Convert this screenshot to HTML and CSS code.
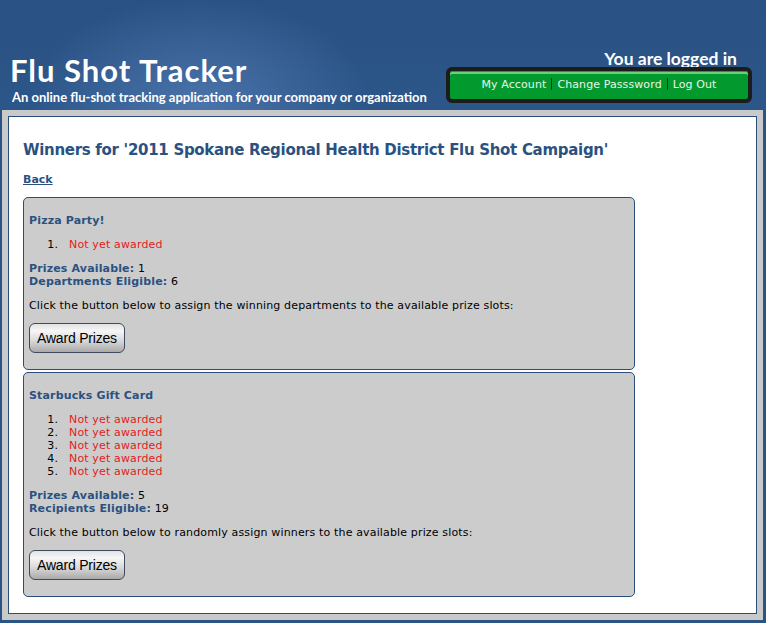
FILE: index.html
```html
<!DOCTYPE html>
<html>
<head>
<meta charset="utf-8">
<title>Flu Shot Tracker</title>
<link rel="stylesheet" href="styles.css">
</head>
<body>
<div class="header">
  <div class="brand">
    <div class="brand-title">Flu Shot Tracker</div>
    <div class="brand-sub">An online flu-shot tracking application for your company or organization</div>
  </div>
  <div class="account">
    <div class="logged">You are logged in</div>
    <div class="nav">
      <a href="#">My Account</a><span class="sep"></span><a href="#">Change Passsword</a><span class="sep"></span><a href="#">Log Out</a>
    </div>
  </div>
</div>
<div class="frame">
  <div class="content">
    <h2 class="page-title">Winners for '2011 Spokane Regional Health District Flu Shot Campaign'</h2>
    <a class="back" href="#">Back</a>
    <div class="panel">
      <div class="prize-name">Pizza Party!</div>
      <ol class="winners">
        <li>Not yet awarded</li>
      </ol>
      <p class="stats"><b>Prizes Available:</b> 1<br><b>Departments Eligible:</b> 6</p>
      <p class="note">Click the button below to assign the winning departments to the available prize slots:</p>
      <button class="award">Award Prizes</button>
    </div>
    <div class="panel">
      <div class="prize-name">Starbucks Gift Card</div>
      <ol class="winners">
        <li>Not yet awarded</li>
        <li>Not yet awarded</li>
        <li>Not yet awarded</li>
        <li>Not yet awarded</li>
        <li>Not yet awarded</li>
      </ol>
      <p class="stats"><b>Prizes Available:</b> 5<br><b>Recipients Eligible:</b> 19</p>
      <p class="note">Click the button below to randomly assign winners to the available prize slots:</p>
      <button class="award">Award Prizes</button>
    </div>
  </div>
</div>
</body>
</html>
```

FILE: styles.css
```css
html, body {
  margin: 0;
  padding: 0;
}
body {
  background: #2a5386;
  font-family: Verdana, "DejaVu Sans", sans-serif;
  font-size: 11px;
  line-height: 13px;
  color: #000;
  height: 623px;
  overflow: hidden;
}
.header {
  height: 110px;
  display: flex;
  justify-content: space-between;
  align-items: flex-end;
  background:
    radial-gradient(ellipse 170px 110px at 200px 105px, rgba(105,145,205,0.5), rgba(105,145,205,0) 100%),
    linear-gradient(#2a5183, #2c5689);
}
.brand {
  padding: 0 0 5px 10px;
  color: #fff;
  font-family: Lato, "Open Sans", sans-serif;
  font-weight: bold;
}
.brand-title {
  font-size: 31px;
  line-height: 37px;
  letter-spacing: 1px;
}
.brand-sub {
  font-size: 13px;
  line-height: 16px;
  padding-left: 2px;
}
.account {
  display: flex;
  flex-direction: column;
  align-items: flex-end;
  margin: 0 14px 7px 0;
}
.logged {
  color: #fff;
  font-family: Lato, "Open Sans", sans-serif;
  font-weight: bold;
  font-size: 17.5px;
  line-height: 21px;
  padding-right: 15px;
  margin-bottom: -2px;
}
.nav {
  width: 298px;
  height: 26px;
  border: 4px solid #1c1c1c;
  border-radius: 6px;
  background: #029a2f;
  box-shadow: inset 0 1px 0 #12a23a, inset 0 3px 0 #6fd07c;
  display: flex;
  align-items: center;
  justify-content: center;
  padding-bottom: 2px;
  box-sizing: content-box;
}
.nav a {
  color: #e8f5e8;
  text-decoration: none;
  font-size: 11px;
  padding: 0 5px;
  letter-spacing: 0.1px;
}
.sep {
  width: 1px;
  height: 12px;
  background: #0b3f16;
}
.frame {
  margin: 0 3px 0 2px;
  border: 6px solid #c9c9c9;
}
.content {
  border: 1px solid #2a4d7a;
  background: #fff;
  height: 472px;
  padding: 24px 14px 0 14px;
}
.page-title {
  margin: 0;
  font-size: 15px;
  letter-spacing: -0.3px;
  line-height: 19px;
  color: #2b5181;
  font-weight: bold;
}
.back {
  display: block;
  width: max-content;
  margin-top: 13px;
  color: #2b5181;
  font-weight: bold;
  font-size: 11px;
  line-height: 13px;
}
.panel {
  width: 600px;
  margin-top: 11px;
  background: #cccccc;
  border: 1px solid #2b4f7a;
  border-radius: 5px;
  padding: 16px 5px 16px 5px;
  letter-spacing: 0.15px;
}
.panel + .panel {
  margin-top: 2px;
}
.prize-name {
  color: #2b5181;
  font-weight: bold;
}
.winners {
  margin: 11px 0;
  padding-left: 40px;
}
.winners li {
  color: #e41b1b;
}
.winners li::marker {
  color: #000;
  content: counter(list-item) ".\00a0\00a0\00a0";
}
.stats {
  margin: 0 0 11px;
}
.stats b {
  color: #2b5181;
}
.note {
  margin: 0 0 11px;
}
.award {
  display: block;
  width: 96px;
  height: 30px;
  font-family: Arial, "Liberation Sans", sans-serif;
  font-size: 14px;
  letter-spacing: -0.2px;
  color: #000;
  border: 1px solid #3e4b5e;
  border-radius: 6px;
  background: linear-gradient(#e2e2e2 0%, #f6f6f6 25%, #d8d8d8 60%, #a9a9a9 100%);
  padding: 0;
}
```
